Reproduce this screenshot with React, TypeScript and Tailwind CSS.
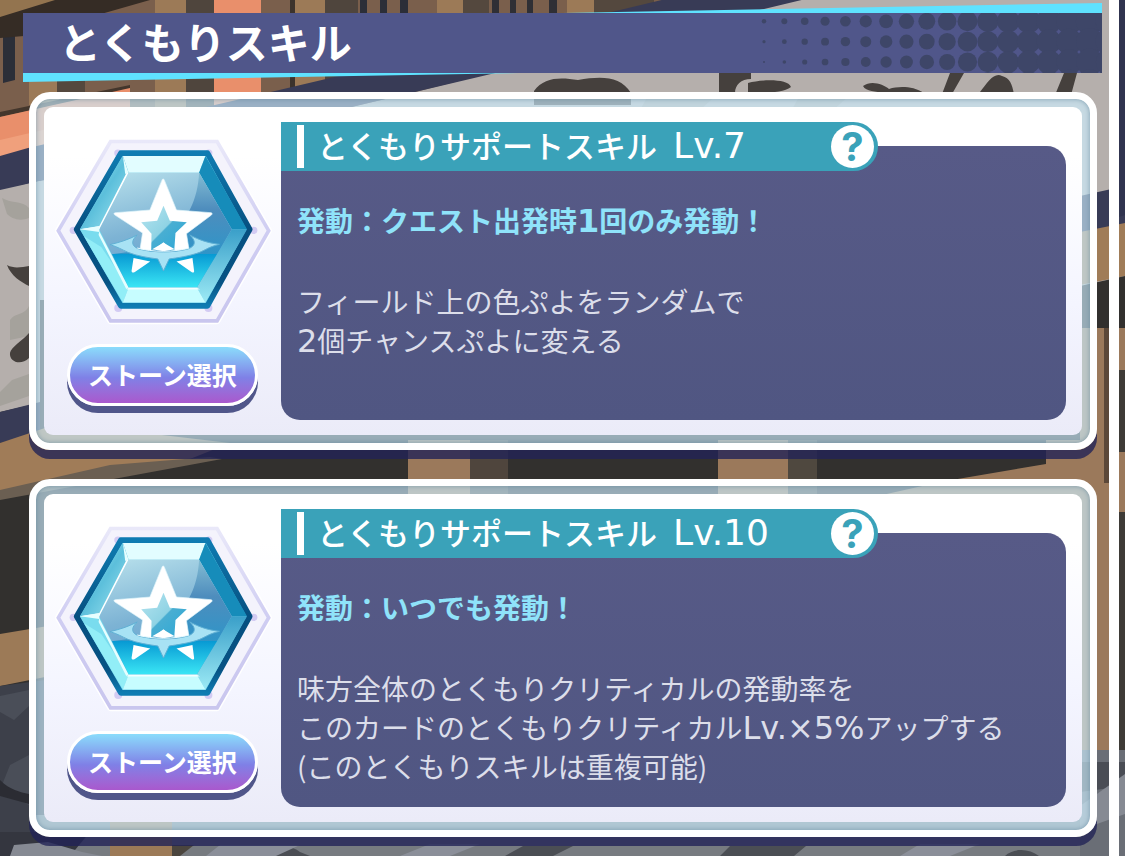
import React from 'react';

/* ++++++++++ TYPES ++++++++++ */
interface Skill {
  id: string;
  level: number;
  timing: string;
  lines: string[];
}

interface SkillCardProps {
  skill: Skill;
}

/* ++++++++++ DATA ++++++++++ */
const skills: Skill[] = [
  {
    id: 'quest-start',
    level: 7,
    timing: '発動：クエスト出発時1回のみ発動！',
    lines: ['フィールド上の色ぷよをランダムで', '2個チャンスぷよに変える'],
  },
  {
    id: 'always',
    level: 10,
    timing: '発動：いつでも発動！',
    lines: [
      '味方全体のとくもりクリティカルの発動率を',
      'このカードのとくもりクリティカルLv.×5%アップする',
      '(このとくもりスキルは重複可能)',
    ],
  },
];

/* ++++++++++ BACKDROP ++++++++++ */
const Backdrop: React.FC = () => (
  <svg
    className="absolute inset-0 h-full w-full"
    viewBox="0 0 1125 856"
    preserveAspectRatio="none"
    aria-hidden="true"
  >
    <rect width="1125" height="856" fill="#32302e" />

    {/* wooden storefront */}
    <rect width="860" height="280" fill="#7a5f4c" />
    <rect x="0" width="60" height="20" fill="#93744f" />
    <path d="M3 34h12v46l-12 3z" fill="#2b2e38" />
    <path d="M29 60h30v45h-30z" fill="#9c7a57" />
    <rect x="57" width="28" height="95" fill="#54483e" />
    <rect x="155" width="31" height="110" fill="#9c7a57" />
    <rect x="186" width="28" height="110" fill="#4f453d" />
    <rect x="214" width="47" height="110" fill="#e98f6b" />
    <rect x="290" width="5" height="110" fill="#3c332c" />
    <rect x="295" width="30" height="110" fill="#9c7a57" />
    <rect x="325" width="33" height="110" fill="#4f453d" />
    <path d="M360 0h7v13h-7zM380 0h7v13h-7zM400 0h8v13h-8z" fill="#2b2e38" />
    <rect x="437" width="26" height="14" fill="#9c7a57" />
    <rect x="463" width="26" height="14" fill="#54483e" />
    <path d="M492 0h7v13h-7zM510 0h6v13h-6zM527 0h6v13h-6zM549 0h8v13h-8z" fill="#2f2f35" />
    <rect x="567" width="27" height="14" fill="#9c7a57" />
    <rect x="594" width="60" height="14" fill="#54483e" />
    <path d="M0 17L55 0h95L24 36 0 38z" fill="#352c25" />
    <path d="M0 112l130-27v4L0 117z" fill="#43362c" />
    <path d="M0 117l130-29v70H0z" fill="#e98f6b" />
    <path d="M0 140l60-14v40H0z" fill="#f0a07c" />

    {/* cloth banner */}
    <path d="M415 92L860 -20h265v320H0V190l28-7z" fill="#b5afac" />
    <path d="M0 156l28-8 247-57L620 10l50-12h140L415 92 28 184 0 192z" fill="#383b56" />
    <path d="M0 190l40-9v222l-40 9z" fill="#b5afac" />
    <path d="M2 198c10 6 20 2 27 10v10c-10 4-18 0-22-4zM10 320c6-8 14-4 19-14v30l-19 4zM0 392l12-12 17-6v22L0 406z" fill="#a5a29c" />
    <path d="M7 265c7 4 15 2 22 1v20c-8-4-18-10-22-21zM29 333v25c-8 8-20 4-19-5 1-6 12-12 19-20z" fill="#45403d" />
    <path d="M534 91c10-14 26-14 44-11 24-4 42-4 53 13v12h-97zM719 73h32v6c-10 0-16 6-16 14h-16zM748 83c16-4 40-4 43 4-8 6-26 6-43 6zM863 86c8-6 20-2 26 3 10-3 24-3 35 4h-40c-8-2-18-1-21-7zM950 73h14l-12 21h-10zM980 92c8-10 14-20 22-16 8 2 10 8 12 18h-34zM1064 73h13l-6 22h-16z" fill="#45403d" />
    <path d="M650 92h70l-20 18h-60zM800 95h50l-20 18h-40z" fill="#a5a29c" />

    {/* beams under the banner */}
    <path d="M0 412l40-10v30L0 443z" fill="#383b56" />
    <path d="M0 443l60-20 170 20-50 20-152 22L0 498z" fill="#a07c58" />
    <path d="M0 490l110-25 100-8 12 2L0 500z" fill="#6b5f52" />
    <rect x="408" y="440" width="62" height="60" fill="#9b795b" />
    <rect x="470" y="440" width="38" height="60" fill="#4f453d" />
    <rect x="718" y="440" width="70" height="60" fill="#9b795b" />
    <rect x="788" y="440" width="29" height="60" fill="#4f483f" />
    <path d="M940 482l106-18v-24h79v320H1040V500H860z" fill="#9b795b" />
    <path d="M0 634l60-10v50L0 686z" fill="#9c7a57" />

    {/* right edge */}
    <path d="M1080 196l45-10v40l-45 9z" fill="#383b56" />
    <path d="M1080 232l45-9v53l-45 9z" fill="#a07c58" />
    <path d="M1080 286l45-10v50h-45z" fill="#32302e" />
    <path d="M1080 328h45v430h-45z" fill="#9b795b" />
    <path d="M1104 328h5v155h-5z" fill="#5c4839" />
    <path d="M1119 0h6v215l-6 2z" fill="#30344f" />
    <path d="M1119 370h6v82h-6zM1119 512h6v240h-6z" fill="#3e3b37" />

    {/* stone ground */}
    <path d="M0 686l60-8v178H0z" fill="#3d404a" />
    <path d="M0 696l29-6v16L14 720 0 712zM10 765l19-10v50L0 790z" fill="#4a4e58" />
    <path d="M0 780c10 10 20 12 29 14v10L0 796z" fill="#2b2c33" />
    <rect y="815" width="1125" height="41" fill="#777b80" />
    <path d="M0 815h34v20l-34 21z" fill="#3d404a" />
    <path d="M0 832h90l-20 24H0z" fill="#34363f" />
    <path d="M14 845l34-3 34 10 20 4H10z" fill="#868a93" />
    <rect x="110" y="815" width="62" height="41" fill="#9c7a57" />
    <path d="M172 845h22l-14 11h-8z" fill="#4b453e" />
    <path d="M268 856c8-10 22-12 32-4l10 4zM505 856l18-10h50l-20 10zM720 856l10-10h76l-12 10zM1005 856c8-8 24-8 34 0z" fill="#4b4e54" />
    <path d="M400 856l30-12h50l-30 12zM900 856l20-12h60l-30 12zM220 845h80l-24 11h-70z" fill="#8b8f99" />
    <path d="M1080 750h45v106h-45z" fill="#6a6e76" />
    <path d="M1080 762h45v24l-45 6z" fill="#4a4d55" />
    <path d="M1080 806l45-32v40l-45 16z" fill="#868a93" />
  </svg>
);

/* ++++++++++ TEXT ++++++++++ */
// latin letters and digits are set a step larger than the kana beside them
const MixedText: React.FC<{ text: string }> = ({ text }) => (
  <>
    {text.split(/([A-Za-z0-9.×%]+)/).map((part, index) =>
      index % 2 === 1 ? (
        <span key={index} className="font-['DejaVu_Sans'] text-[32px] leading-none">
          {part}
        </span>
      ) : (
        part
      )
    )}
  </>
);

/* ++++++++++ TITLE BAR ++++++++++ */
// dots grow to the right until they merge into a solid tone
const dotRadius = (col: number, row: number) => {
  const base = col < 10 ? 2.2 + col * 0.78 : 10 + (col - 10) * 0.63;
  return Math.max(0, base - row * (col < 10 ? 0.6 : 0.2));
};

const Halftone: React.FC = () => (
  <svg
    className="absolute inset-y-0 right-0 h-full w-[370px]"
    viewBox="0 0 370 60"
    preserveAspectRatio="xMaxYMid slice"
    aria-hidden="true"
  >
    {[0, 1, 2, 3, 4].map((row) =>
      Array.from({ length: 18 }, (_, col) => (
        <circle
          key={`${row}-${col}`}
          cx={32 + col * 20.35}
          cy={8.3 + (row - 1) * 20.35}
          r={dotRadius(col, Math.max(0, row - 1))}
          fill="#3e4668"
        />
      ))
    )}
  </svg>
);

const TitleBar: React.FC = () => (
  <header className="relative ml-[23px] mr-[7px] h-[60px] bg-[#50568a]">
    <svg
      className="absolute -top-[10px] right-0 h-[10px] w-1/2"
      viewBox="0 0 540 10"
      preserveAspectRatio="none"
      aria-hidden="true"
    >
      <path d="M0 10L540 0v10z" fill="#5fe2ff" />
    </svg>
    <svg
      className="absolute -bottom-[9px] left-0 h-[9px] w-[46%]"
      viewBox="0 0 500 9"
      preserveAspectRatio="none"
      aria-hidden="true"
    >
      <path d="M0 0h500L0 9z" fill="#5fe2ff" />
    </svg>
    <Halftone />
    <h1 className="relative pl-9 text-[42px] font-bold leading-[56px] text-white">とくもりスキル</h1>
  </header>
);

/* ++++++++++ STONE ++++++++++ */
const Stone: React.FC<{ id: string }> = ({ id }) => (
  <svg className="h-[190px] w-[218px]" viewBox="162 50 655 570" aria-hidden="true">
    <defs>
      <linearGradient id={`${id}-frame`} x1="0" y1="0" x2="0" y2="1">
        <stop offset="0" stopColor="#e9e8f9" />
        <stop offset="0.5" stopColor="#cfcdf2" />
        <stop offset="1" stopColor="#c9c6ee" />
      </linearGradient>
      <linearGradient id={`${id}-rim`} x1="0" y1="0" x2="0" y2="1">
        <stop offset="0" stopColor="#0f7cb2" />
        <stop offset="0.5" stopColor="#064f80" />
        <stop offset="0.85" stopColor="#075384" />
        <stop offset="1" stopColor="#0f7cb2" />
      </linearGradient>
      <linearGradient id={`${id}-face`} x1="0" y1="0" x2="0.3" y2="1">
        <stop offset="0" stopColor="#b9e1ec" />
        <stop offset="0.55" stopColor="#7db3d4" />
        <stop offset="1" stopColor="#5f9fd0" />
      </linearGradient>
      <linearGradient id={`${id}-shade`} x1="0" y1="0" x2="0" y2="1">
        <stop offset="0" stopColor="#83bcd3" />
        <stop offset="0.45" stopColor="#4e8dbd" />
        <stop offset="1" stopColor="#2f95c8" />
      </linearGradient>
      <linearGradient id={`${id}-water`} x1="0" y1="0" x2="0" y2="1">
        <stop offset="0" stopColor="#0799d3" />
        <stop offset="1" stopColor="#3be6f5" />
      </linearGradient>
      <linearGradient id={`${id}-left`} x1="0" y1="0" x2="1" y2="1">
        <stop offset="0" stopColor="#a6f0f7" />
        <stop offset="0.5" stopColor="#5cbfdb" />
        <stop offset="1" stopColor="#a5e9f4" />
      </linearGradient>
      <linearGradient id={`${id}-lower`} x1="0" y1="0" x2="0" y2="1">
        <stop offset="0" stopColor="#3a9fc9" />
        <stop offset="1" stopColor="#9ceaf5" />
      </linearGradient>
      <linearGradient id={`${id}-core`} x1="0" y1="0" x2="1" y2="1">
        <stop offset="0" stopColor="#b6e4ef" />
        <stop offset="0.5" stopColor="#8fd3e4" />
        <stop offset="0.52" stopColor="#49aed2" />
        <stop offset="1" stopColor="#2aa7d6" />
      </linearGradient>
    </defs>

    {/* outer frame */}
    <path d="M332 63h320l155 268-155 271H332L175 331z" fill="#f6f6fd" stroke="#fff" strokeWidth="20" strokeLinejoin="round" />
    <path d="M332 63h320l155 268-155 271H332L175 331z" fill="#f4f3fc" stroke={`url(#${id}-frame)`} strokeWidth="11" />
    <g fill="#d3cbf3">
      <circle cx="354" cy="98" r="11" />
      <circle cx="627" cy="98" r="11" />
      <circle cx="355" cy="563" r="12" />
      <circle cx="626" cy="563" r="12" />
      <circle cx="220" cy="330" r="11" />
      <circle cx="762" cy="330" r="11" />
    </g>

    {/* gem bevels */}
    <path d="M363 98h260l127 229-127 230H363L230 327z" fill="#69cbe6" stroke={`url(#${id}-rim)`} strokeWidth="17" strokeLinejoin="round" />
    <path d="M369 107h248l-19 50H386z" fill="#e2fdff" />
    <path d="M369 107l17 50-88 170-58 0z" fill={`url(#${id}-left)`} />
    <path d="M240 327h58l88 175-17 45z" fill="#79dcee" />
    <path d="M304 380l-52-32 117 199 17-45z" fill="#9cf5fb" opacity="0.7" />
    <path d="M617 107l125 220h-46L598 157z" fill="#168cba" />
    <path d="M742 327L617 547l-26-45 105-175z" fill={`url(#${id}-lower)`} />
    <path d="M369 547l17-45h205l26 45z" fill="#c7fdff" />

    {/* gem face */}
    <path d="M386 157h212l98 170-105 175H386l-88-175z" fill={`url(#${id}-face)`} />
    <path d="M598 157l98 170-44 74H340c130-10 250-80 258-244z" fill={`url(#${id}-shade)`} />
    <path d="M336 401h316l-61 101H386z" fill={`url(#${id}-water)`} />
    <path d="M386 157l-88 170-58 0 58-9 82-161z" fill="#fff" />
    <path d="M240 327l58-10v18zM369 107l17 50-10 4zM298 333l88 169-7 4-83-162z" fill="#e6feff" />
    <path d="M386 502h205l10 6H380z" fill="#fff" opacity="0.8" />

    {/* star */}
    <path
      d="M486 180c2-6 6-6 8 0l36 89 104 8c4 1 4 4 1 7l-75 56 8 50h-42l-36-20-36 20h-34l8-52-83-54c-4-3-4-6 1-7l104-8z"
      fill="#fff"
      stroke="#dff4fb"
      strokeWidth="2"
    />
    <path d="M491 256l19 45 51 5-34 32-4 56-32-28-37 28 1-54-31-34 48-5z" fill={`url(#${id}-core)`} />
    <path d="M457 387l34-20 34 20-34 6zM395 452l6-39 50 11-46 31c-6 3-9 2-10-3zM583 452l-5-39-48 11 45 31c5 3 8 2 8-3z" fill="#fff" />

    {/* ring */}
    <path
      d="M330 373C360 366 385 358 412 344C388 366 398 382 425 388C465 397 517 397 556 388C584 382 594 366 570 344C597 358 622 368 659 372C630 379 618 388 600 396C572 407 530 413 508 416L491 452L474 416C450 413 410 407 384 396C366 388 354 380 330 373z"
      fill="#a8e2f4"
      stroke="#5fb0d4"
      strokeWidth="3"
    />
    <path d="M412 383C455 396 526 396 568 383" fill="none" stroke="#e8fbff" strokeWidth="3" />
  </svg>
);

/* ++++++++++ SKILL CARD ++++++++++ */
const SkillCard: React.FC<SkillCardProps> = ({ skill }) => (
  <article className="rounded-[21px] border-[7px] border-white bg-[#cff0ff]/65 p-2 shadow-[0_9px_0_rgba(34,35,86,0.8),inset_0_0_5px_rgba(80,120,145,0.6)]">
    <div className="flex rounded-[9px] bg-linear-to-b from-white from-15% via-[#f4f5ff] via-60% to-[#ebebf8] pb-[15px] pr-4">
      <div className="flex w-[237px] shrink-0 flex-col items-center pt-[30px]">
        <Stone id={skill.id} />
        <button
          type="button"
          className="mt-[17px] h-[62px] w-[191px] rounded-full border-[3px] border-white bg-linear-to-b from-[#8adcfb] via-[#7f80e6] via-55% to-[#a958cd] text-[25px] font-bold text-white shadow-[0_7px_0_#50568a]"
        >
          ストーン選択
        </button>
      </div>

      <div className="mt-[39px] min-h-[274px] min-w-0 flex-1 rounded-[19px] rounded-tl-none bg-linear-to-b from-[#575a87] to-[#505682]">
        <div className="-mt-6 flex h-[49px] w-full max-w-[597px] items-center rounded-r-full bg-[#3aa2b9] pl-4 pr-1">
          <span className="h-[43px] w-[7px] bg-white" />
          <h2 className="flex-1 pb-1 pl-[13px] text-[31px] font-medium leading-[43px] text-white">
            とくもりサポートスキル
            <span className="ml-4 font-['DejaVu_Sans'] text-[36px] font-normal leading-none">
              Lv.{skill.level}
            </span>
          </h2>
          <button
            type="button"
            aria-label="ヘルプ"
            className="h-[43px] w-[43px] rounded-full bg-white text-center font-[Inter] text-[40px] font-bold leading-[43px] text-[#3aa2b9]"
          >
            ?
          </button>
        </div>
        <div className="px-4 pt-[30px] text-[28px] leading-[39px]">
          <h3 className="font-bold text-[#8fe3fa]">
            <MixedText text={skill.timing} />
          </h3>
          <p className="mt-[42px] text-[#dcdeea]">
            {skill.lines.map((line) => (
              <span key={line} className="block">
                <MixedText text={line} />
              </span>
            ))}
          </p>
        </div>
      </div>
    </div>
  </article>
);

/* ++++++++++ APP ++++++++++ */
const App: React.FC = () => {
  return (
    <div className="relative min-h-screen overflow-hidden font-['Noto_Sans_CJK_JP',sans-serif]">
      <Backdrop />
      <main className="relative mr-[6px] min-h-screen border-r-[10px] border-white pb-[17px] pt-[13px]">
        <TitleBar />
        <div className="ml-[29px] mr-3 mt-[19px] flex flex-col gap-[29px]">
          {skills.map((skill) => (
            <SkillCard key={skill.id} skill={skill} />
          ))}
        </div>
      </main>
    </div>
  );
};

export default App;
